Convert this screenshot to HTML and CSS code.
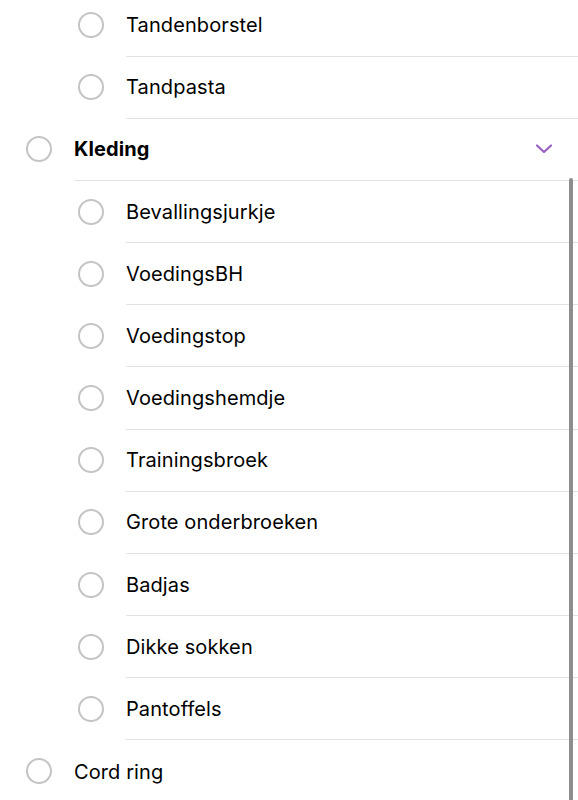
FILE: index.html
```html
<!DOCTYPE html>
<html lang="nl">
<head>
<meta charset="utf-8">
<link rel="stylesheet" href="styles.css">
</head>
<body>
<div class="list">
  <div class="row child"><span class="check"></span><span class="label">Tandenborstel</span></div>
  <div class="row child"><span class="check"></span><span class="label">Tandpasta</span></div>
  <div class="row parent"><span class="check"></span><span class="label bold">Kleding</span>
    <svg class="chevron" width="18" height="12" viewBox="0 0 18 12"><path d="M2 2.5 L9 9 L16 2.5" fill="none" stroke="#9a5fc2" stroke-width="2.2" stroke-linecap="round" stroke-linejoin="round"/></svg>
  </div>
  <div class="row child"><span class="check"></span><span class="label">Bevallingsjurkje</span></div>
  <div class="row child"><span class="check"></span><span class="label">VoedingsBH</span></div>
  <div class="row child"><span class="check"></span><span class="label">Voedingstop</span></div>
  <div class="row child"><span class="check"></span><span class="label">Voedingshemdje</span></div>
  <div class="row child"><span class="check"></span><span class="label">Trainingsbroek</span></div>
  <div class="row child"><span class="check"></span><span class="label">Grote onderbroeken</span></div>
  <div class="row child"><span class="check"></span><span class="label">Badjas</span></div>
  <div class="row child"><span class="check"></span><span class="label">Dikke sokken</span></div>
  <div class="row child"><span class="check"></span><span class="label">Pantoffels</span></div>
  <div class="row parent last"><span class="check"></span><span class="label">Cord ring</span></div>
</div>
<div class="scrollbar"></div>
</body>
</html>
```
FILE: styles.css
```css
html, body {
  margin: 0;
  padding: 0;
  background: #ffffff;
  overflow: hidden;
}
body {
  width: 578px;
  height: 800px;
  position: relative;
  font-family: Inter, "Liberation Sans", sans-serif;
  color: #000;
}
.list {
  margin-top: -5.6px;
}
.row {
  display: flex;
  align-items: center;
  height: 62.18px;
  box-sizing: border-box;
  position: relative;
}
.row.child {
  padding-left: 78px;
}
.row.parent {
  padding-left: 26px;
}
.check {
  width: 26px;
  height: 26px;
  box-sizing: border-box;
  border: 2px solid #c4c4c4;
  border-radius: 50%;
  flex: none;
  margin-top: -1px;
}
.label {
  flex: 1;
  align-self: stretch;
  display: flex;
  align-items: center;
  font-size: 20px;
  letter-spacing: 0.1px;
  border-bottom: 1px solid #e2e2e2;
  box-sizing: border-box;
}
.row.child .label {
  margin-left: 22px;
}
.row.parent .label {
  margin-left: 22px;
}
.row.last .label {
  border-bottom: none;
}
.bold {
  font-weight: 700;
}
.chevron {
  position: absolute;
  right: 25px;
  top: 24px;
}
.scrollbar {
  position: absolute;
  left: 569px;
  top: 178px;
  width: 4px;
  height: 640px;
  border-radius: 2px;
  background: #8e8e8e;
}
```
